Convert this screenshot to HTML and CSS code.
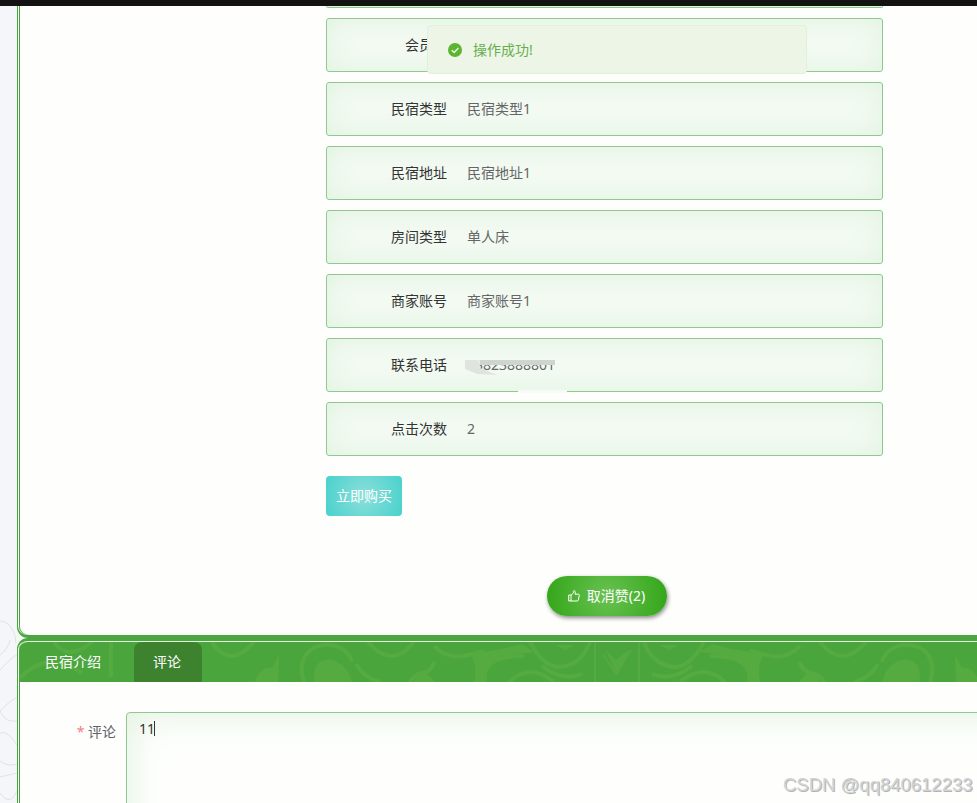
FILE: index.html
```html
<!DOCTYPE html>
<html lang="zh-CN">
<head>
<meta charset="utf-8">
<title>民宿介绍</title>
<link rel="stylesheet" href="styles.css">
</head>
<body>
<div class="topbar"></div>
<div class="page">
  <aside class="gutter">
    <svg width="17" height="190" viewBox="0 0 17 190" fill="none" stroke="#dfe2e3" stroke-width="1">
      <path d="M0 8C8 8 15 16 16 30M0 42C5 38 8 34 10 27M0 57C7 50 12 44 17 42M0 98Q7 90 17 84M0 98Q5 110 17 108M0 120Q8 117 17 132M0 148Q8 154 17 151M0 164L17 160M0 180Q10 194 17 178"/>
    </svg>
  </aside>
  <main class="content">
    <section class="panel detail">
      <div class="info">
        <div class="row row-cut"></div>
        <div class="row"><span class="label">会员价</span><span class="value"></span></div>
        <div class="row"><span class="label">民宿类型</span><span class="value">民宿类型1</span></div>
        <div class="row"><span class="label">民宿地址</span><span class="value">民宿地址1</span></div>
        <div class="row"><span class="label">房间类型</span><span class="value">单人床</span></div>
        <div class="row"><span class="label">商家账号</span><span class="value">商家账号1</span></div>
        <div class="row row-phone"><span class="label">联系电话</span><span class="value masked">13823888801</span></div>
        <div class="row"><span class="label">点击次数</span><span class="value">2</span></div>
        <button class="buy">立即购买</button>
      </div>
      <button class="praise">
        <svg width="12" height="12" viewBox="0 0 12 12" fill="none" stroke="#fff" stroke-width="1"><path d="M.7 5H3v6H.7zM3 5.3L5.4 3V1.5Q5.5.6 6.4.7 7.5 1 7.3 2.8L7 4.2h3.6q.9.2.7 1.1L10.300 10q-.2 1-1.200 1H3"/></svg>
        <span>取消赞(2)</span>
      </button>
    </section>
    <section class="panel tabs">
      <nav class="tabbar">
        <svg class="swirls" width="957" height="40" viewBox="0 0 957 40" fill="none" stroke="#58ad40" stroke-width="4">
          <defs>
            <g id="swirl">
              <path d="M10 0Q28 28 52 0M102 40C88 -2 142 -8 150 20M115 40C108 14 140 12 148 40M166 0Q190 28 212 0M154 22Q162 36 178 40M232 20C228 36 216 26 208 40"/>
              <path d="M53 40Q58 24 70 26L77 13 76 40ZM117 40Q110 22 127 20 142 22 146 40ZM212 40Q220 22 233 40Z" fill="#58ad40" stroke="none"/>
              <path d="M232 4C250 22 266 12 282 9M283 40C280 18 300 14 322 14M307 40Q328 20 352 40M328 0Q344 30 364 24 380 20 388 0M340 24Q360 40 380 32"/>
              <path d="M268 12L300 7 320 2 332 10 300 14Q284 22 282 40H272Q276 24 268 12Z" fill="#58ad40" stroke="none"/>
              <path d="M354 3L363 8 372 3Z" fill="#58ad40" stroke="none"/>
            </g>
          </defs>
          <use href="#swirl" x="182"/>
          <use href="#swirl" transform="translate(1012 0) scale(-1 1)"/>
          <path d="M583 12L596 32 611 8M575 0V40M619 0V40" stroke-width="2"/>
          <path d="M586 8L596 18 609 8 597 34Z" fill="#58ad40" stroke="none"/>
          <path d="M0 36Q28 7 62 31M34 0Q48 20 72 0M91 0V35"/>
        </svg>
        <a class="tab">民宿介绍</a>
        <a class="tab active">评论</a>
      </nav>
      <form class="comment">
        <label class="comment-label"><i>*</i> 评论</label>
        <div class="editor">11<span class="caret"></span></div>
      </form>
    </section>
  </main>
</div>
<div class="message">
  <svg width="14" height="14" viewBox="0 0 14 14"><circle cx="7" cy="7" r="7" fill="#5cb531"/><path d="M3.700 7.200L6.200 9.500 10.400 5" fill="none" stroke="#edf5e7" stroke-width="1.400"/></svg>
  <span>操作成功!</span>
</div>
<div class="watermark">CSDN @qq840612233</div>
</body>
</html>
```
FILE: styles.css
```css
* { box-sizing: border-box; }
body {
  margin: 0;
  width: 977px;
  height: 803px;
  overflow: hidden;
  position: relative;
  background: #fdfffc;
  font: 14px/20px "Noto Sans", "Noto Sans CJK SC", sans-serif;
  color: #333;
}
button { font: inherit; border: 0; padding: 0; color: #fff; }
.topbar { height: 6px; background: #141112; }
.page { display: flex; height: 797px; }
.gutter {
  width: 17px;
  flex: none;
  padding-top: 607px;
  background: #f5f6f9;
}
.gutter svg { display: block; }
.content {
  width: 960px;
  flex: none;
  overflow: hidden;
  background: linear-gradient(90deg, #f0faee 8px, #fdfffc 8px);
}
.panel { width: 1000px; background: #fefffd; }
.detail {
  height: 632px;
  padding-left: 2px;
  border-left: 1px solid #4ba540;
  border-bottom: 3px solid #4ba540;
  border-radius: 0 0 0 11px;
  box-shadow: inset 1px 0 0 #f2fbef, inset 2px 0 0 #4ba540;
}
.info { width: 557px; margin-left: 306px; }
.row {
  height: 54px;
  margin-bottom: 10px;
  display: flex;
  align-items: center;
  border: 1px solid #8fc98f;
  border-radius: 3px;
  background: #f3faf3;
  box-shadow: inset 0 0 28px #e0f3de;
}
.row-cut { height: 2px; border-top: 0; border-radius: 0 0 3px 3px; }
.label { width: 120px; text-align: right; white-space: nowrap; }
.row .value { margin-left: 20px; color: #666; }
.masked { position: relative; }
.masked::before {
  content: "";
  position: absolute;
  left: -2px;
  top: 5px;
  width: 90px;
  height: 5px;
  background: linear-gradient(90deg, #e4e9e4 15px, #d0d4d0 15px);
}
.masked::after {
  content: "";
  position: absolute;
  left: -2px;
  top: 5px;
  width: 32px;
  height: 15px;
  background: #dfe4df;
  clip-path: polygon(0 0, 12px 0, 15px 8px, 32px 15px, 12px 14px, 0 9px);
}
.row-phone { position: relative; }
.row-phone::after {
  content: "";
  position: absolute;
  left: 191px;
  bottom: -2px;
  width: 49px;
  height: 3px;
  background: #f7fbf6;
}
.buy {
  display: block;
  width: 76px;
  height: 40px;
  margin-top: 20px;
  border-radius: 4px;
  background: radial-gradient(circle, #8cdfda, #48d1cc);
}
.praise {
  width: 120px;
  height: 40px;
  margin: 60px 0 0 527px;
  display: flex;
  align-items: center;
  justify-content: center;
  gap: 7px;
  border-radius: 20px;
  background: radial-gradient(circle, #69c252, #32a518);
  box-shadow: 1px 2px 4px #888;
}
.praise span { margin-right: 1px; }
.tabs {
  height: 180px;
  padding-left: 2px;
  border-left: 1px solid #4ba540;
  border-top: 3px solid #4ba540;
  border-radius: 11px 0 0 0;
  box-shadow: inset 1px 0 0 #f2fbef, inset 2px 0 0 #4ba540;
}
.tabbar {
  position: relative;
  display: flex;
  height: 41px;
  margin-left: -1px;
  padding-left: 1px;
  border-top: 1px solid #e5f7df;
  border-radius: 9px 0 0 0;
  background: #4aa63e;
  color: #fff;
  line-height: 40px;
  overflow: hidden;
}
.swirls { position: absolute; left: 1px; top: 0; opacity: .8; }
.tab { position: relative; width: 114px; padding-left: 25px; }
.tab.active {
  width: 68px;
  padding-left: 19px;
  border-radius: 8px 8px 0 0;
  background: rgba(57, 120, 43, .75);
}
.comment { display: flex; padding-top: 30px; }
.comment-label { width: 96px; flex: none; padding-top: 10px; text-align: right; color: #606266; }
.comment-label i { color: #f08080; font-style: normal; }
.editor {
  width: 1000px;
  flex: none;
  height: 150px;
  margin-left: 10px;
  padding: 6px 12px;
  border: 1px solid #8fc98f;
  border-radius: 4px;
  box-shadow: inset 0 0 40px #dff0dd;
  display: flex;
}
.caret { width: 1px; height: 15px; margin-top: 2px; margin-left: -1px; background: #333; }
.message {
  position: absolute;
  left: 427px;
  top: 25px;
  width: 380px;
  height: 49px;
  padding-left: 20px;
  display: flex;
  align-items: center;
  gap: 11px;
  border: 1px solid #e1f0da;
  border-radius: 4px;
  background: #edf5e7;
  color: #67ae4e;
}
.watermark {
  position: absolute;
  left: 783px;
  top: 773px;
  font: 18.5px/24px "Liberation Sans", sans-serif;
  color: #d2d3d2;
  text-shadow: 1px 1px 0 #b4b4b4;
  white-space: nowrap;
}
```
